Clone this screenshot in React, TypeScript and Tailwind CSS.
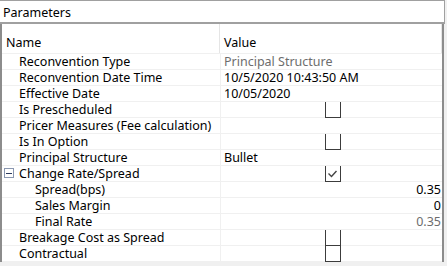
import React from "react";

type Row = {
  name: string;
  level: 1 | 2;
  value?: string;
  kind?: "text" | "muted" | "num" | "numMuted" | "check" | "checked";
  group?: boolean;
};

const rows: Row[] = [
  { name: "Reconvention Type", level: 1, value: "Principal Structure", kind: "muted" },
  { name: "Reconvention Date Time", level: 1, value: "10/5/2020 10:43:50 AM", kind: "text" },
  { name: "Effective Date", level: 1, value: "10/05/2020", kind: "text" },
  { name: "Is Prescheduled", level: 1, kind: "check" },
  { name: "Pricer Measures (Fee calculation)", level: 1 },
  { name: "Is In Option", level: 1, kind: "check" },
  { name: "Principal Structure", level: 1, value: "Bullet", kind: "text" },
  { name: "Change Rate/Spread", level: 1, kind: "checked", group: true },
  { name: "Spread(bps)", level: 2, value: "0.35", kind: "num" },
  { name: "Sales Margin", level: 2, value: "0", kind: "num" },
  { name: "Final Rate", level: 2, value: "0.35", kind: "numMuted" },
  { name: "Breakage Cost as Spread", level: 1, kind: "check" },
  { name: "Contractual", level: 1, kind: "check" },
];

const Check = ({ checked }: { checked?: boolean }) => (
  <div className="absolute left-[104px] top-0 h-[16px] w-[16px] border-x-[1.5px] border-b-[1.5px] border-[#3c3c3c]">
    {checked && (
      <svg className="absolute left-[1px] top-[3px]" width="11" height="10" viewBox="0 0 11 10">
        <path d="M1.5 4.5 L4.5 7.5 L9.5 2" fill="none" stroke="#444" strokeWidth="1.4" />
      </svg>
    )}
  </div>
);

const Value = ({ row }: { row: Row }) => {
  switch (row.kind) {
    case "muted":
      return <span className="pl-[3px] text-[#6d6d6d]">{row.value}</span>;
    case "text":
      return <span className="pl-[3px]">{row.value}</span>;
    case "num":
      return <span className="ml-auto pr-[1px]">{row.value}</span>;
    case "numMuted":
      return <span className="ml-auto pr-[1px] text-[#6d6d6d]">{row.value}</span>;
    case "check":
      return <Check />;
    case "checked":
      return <Check checked />;
    default:
      return null;
  }
};

export default function App() {
  return (
    <div
      className="h-[266px] w-[447px] bg-[#f0f0f0] text-[12.5px] leading-[16px] text-black"
      style={{ fontFamily: '"Noto Sans", "Open Sans", sans-serif' }}
    >
      <div className="h-[24px] w-[445px] border-t border-r border-b-2 border-[#a0a0a0] bg-white pl-[3px] pt-[4px]">
        Parameters
      </div>
      <div className="flex h-[238px] w-[444px] flex-col border-l-2 border-r-2 border-[#8c8c8c] bg-white">
        <div className="flex h-[30px] border-b border-[#f0f0f0]">
          <div className="w-[218px] border-r border-[#e5e5e5] pl-[4px] pt-[11px]">Name</div>
          <div className="flex-1 border-r border-[#e5e5e5] pl-[4px] pt-[11px]">Value</div>
        </div>
        {rows.map((row) => (
          <div key={row.name} className="flex h-[16px] border-b border-[#f0f0f0]">
            <div className="relative flex w-[219px] items-center border-r border-[#f0f0f0]">
              {row.group && (
                <div className="absolute left-[2px] top-[2px] flex h-[10px] w-[10px] items-center justify-center border border-[#8a97b0] bg-white">
                  <div className="h-px w-[6px] bg-[#2b3a5e]" />
                </div>
              )}
              <span className={row.level === 2 ? "pl-[33px]" : "pl-[17px]"}>{row.name}</span>
            </div>
            <div className="relative flex flex-1 items-center">
              <Value row={row} />
            </div>
          </div>
        ))}
      </div>
    </div>
  );
}
